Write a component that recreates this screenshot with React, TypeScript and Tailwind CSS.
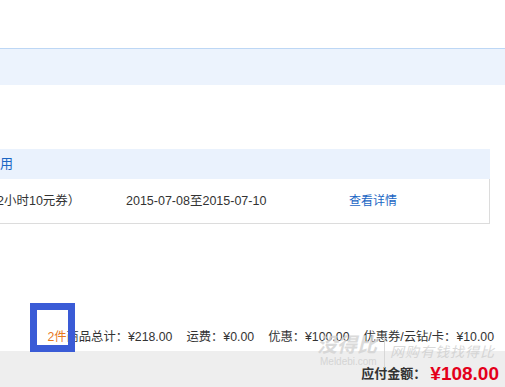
import React from "react";

const font = { fontFamily: '"Liberation Sans", Arial, "Noto Sans CJK SC", sans-serif' };

function Watermark() {
  return (
    <div className="absolute left-[317px] top-[334px] flex items-start whitespace-nowrap pointer-events-none select-none opacity-80">
      <div className="flex flex-col items-start">
        <span className="text-[20px] leading-[22px] italic font-bold text-[#d2d2d2]">没得比</span>
        <span className="text-[10px] leading-[11px] text-[#cfcfcf] ml-[3px]">Meldebi.com</span>
      </div>
      <div className="w-px h-[32px] bg-[#d2d2d2] ml-[7px] mt-[2px]" />
      <span className="text-[14px] leading-[16px] italic text-[#cfcfcf] ml-[5px] mt-[10px] tracking-[1px]">网购有钱找得比</span>
    </div>
  );
}

export default function App() {
  return (
    <div className="relative w-[505px] h-[387px] overflow-hidden bg-white text-[12px] text-[#333]" style={font}>
      <div className="h-[48px]" />
      <div className="h-[37px] border-t border-[#bdd7f5] bg-[#ecf3fd]" />

      <div className="mt-[64px] -ml-[20px] w-[510px]">
        <div className="h-[30px] bg-[#eaf2fd] flex items-center pl-[7px] text-[13px] text-[#1a66c4]">可用</div>
        <div className="h-[45px] border-r border-b border-[#dcdcdc] flex items-center text-[12.5px] text-[#333]">
          <span className="ml-[17px] w-[129px] whitespace-nowrap">2小时10元券）</span>
          <span className="w-[223px] whitespace-nowrap">2015-07-08至2015-07-10</span>
          <span className="text-[12px] text-[#1a66c4]">查看详情</span>
        </div>
      </div>

      <div className="mt-[103px] h-[20px] flex items-center justify-end pr-[11px] gap-[14px] whitespace-nowrap text-[12.3px]">
        <span>
          <span className="text-[#e8791e]">2件</span>商品总计：¥218.00
        </span>
        <span>运费：¥0.00</span>
        <span>优惠：¥100.00</span>
        <span>优惠券/云钻/卡：¥10.00</span>
      </div>

      <div className="mt-[4px] h-[36px] bg-[#eeeeee] flex items-end justify-end pr-[6px] pb-[3px]">
        <span className="text-[13px] font-bold text-[#333] mb-[1px]">应付金额：</span>
        <span className="text-[19px] leading-[20px] font-bold text-[#e4001a] ml-[4px]">¥108.00</span>
      </div>

      <Watermark />

      <div className="absolute left-[30px] top-[303px] w-[45px] h-[49px] border-[7px] border-[#3a5bd6]" />
    </div>
  );
}
